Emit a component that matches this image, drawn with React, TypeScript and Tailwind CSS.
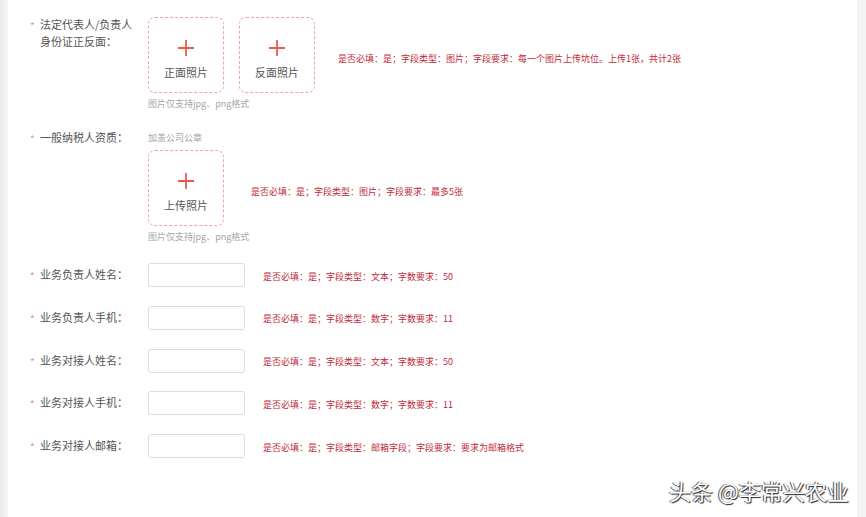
const font = "font-['Noto_Sans_CJK_SC','Noto_Sans',sans-serif]";

function Label({ lines }: { lines: string[] }) {
	return (
		<div className="flex w-[118px] shrink-0 flex-row">
			<span className="w-[10px] pt-[1px] text-[10px] leading-[17px] text-[#f08c8c]">*</span>
			<div className="text-[11px] leading-[17px] text-[#555]">
				{lines.map((l) => (
					<div key={l}>{l}</div>
				))}
			</div>
		</div>
	);
}

function Note({ children }: { children: string }) {
	return <span className="whitespace-nowrap text-[9px] leading-[12px] text-[#c02a3a]">{children}</span>;
}

function Hint({ children }: { children: string }) {
	return <div className="text-[9px] leading-[12px] text-[#a6a6a6]">{children}</div>;
}

function UploadBox({ text }: { text: string }) {
	return (
		<div className="flex h-[76px] w-[76px] flex-col items-center rounded-[7px] border border-dashed border-[#f2a3a3]">
			<svg width="18" height="18" viewBox="0 0 18 18" className="mt-[21px]">
				<path d="M9 1v16M1 9h16" stroke="#e65b53" strokeWidth="1.8" />
			</svg>
			<span className="mt-[8px] text-[11px] leading-[14px] text-[#555]">{text}</span>
		</div>
	);
}

function InputRow({ label, note }: { label: string; note: string }) {
	return (
		<div className="flex h-[24px] flex-row items-center">
			<Label lines={[label]} />
			<div className="h-[24px] w-[97px] rounded-[3px] border border-[#dcdcdc] bg-white" />
			<span className="ml-[18px] pb-[5px]">
				<Note>{note}</Note>
			</span>
		</div>
	);
}

export default function App() {
	return (
		<div className={`relative flex h-[517px] w-[866px] flex-row overflow-hidden bg-white ${font}`}>
			<div className="w-[8px] shrink-0 bg-gradient-to-r from-[#e9e9e9] to-[#f6f6f6]" />
			<div className="flex flex-1 flex-col pl-[22px] pt-[16px]">
				<div className="flex flex-row">
					<Label lines={['法定代表人/负责人', '身份证正反面：']} />
					<div className="flex flex-col pt-[1px]">
						<div className="flex flex-row items-center">
							<div className="flex flex-row gap-[15px]">
								<UploadBox text="正面照片" />
								<UploadBox text="反面照片" />
							</div>
							<span className="ml-[23px]">
								<Note>是否必填：是；字段类型：图片；字段要求：每一个图片上传坑位。上传1张，共计2张</Note>
							</span>
						</div>
						<div className="mt-[5px]">
							<Hint>图片仅支持jpg、png格式</Hint>
						</div>
					</div>
				</div>

				<div className="mt-[19px] flex flex-row">
					<Label lines={['一般纳税人资质：']} />
					<div className="flex flex-col">
						<div className="pt-[3px]">
							<Hint>加盖公司公章</Hint>
						</div>
						<div className="mt-[6px] flex flex-row items-center">
							<UploadBox text="上传照片" />
							<span className="ml-[27px]">
								<Note>是否必填：是；字段类型：图片；字段要求：最多5张</Note>
							</span>
						</div>
						<div className="mt-[5px]">
							<Hint>图片仅支持jpg、png格式</Hint>
						</div>
					</div>
				</div>

				<div className="mt-[20px] flex flex-col gap-[18.8px]">
					<InputRow label="业务负责人姓名：" note="是否必填：是；字段类型：文本；字数要求：50" />
					<InputRow label="业务负责人手机：" note="是否必填：是；字段类型：数字；字数要求：11" />
					<InputRow label="业务对接人姓名：" note="是否必填：是；字段类型：文本；字数要求：50" />
					<InputRow label="业务对接人手机：" note="是否必填：是；字段类型：数字；字数要求：11" />
					<InputRow label="业务对接人邮箱：" note="是否必填：是；字段类型：邮箱字段；字段要求：要求为邮箱格式" />
				</div>
			</div>
			<div className="w-[9px] shrink-0 bg-[#f3f3f3]" />
			<div className="absolute left-[669px] top-[475px] text-[22px] leading-[30px] text-white [text-shadow:1px_1px_1px_#222,-1px_0_1px_#444]">
				头条 @李常兴农业
			</div>
		</div>
	);
}
